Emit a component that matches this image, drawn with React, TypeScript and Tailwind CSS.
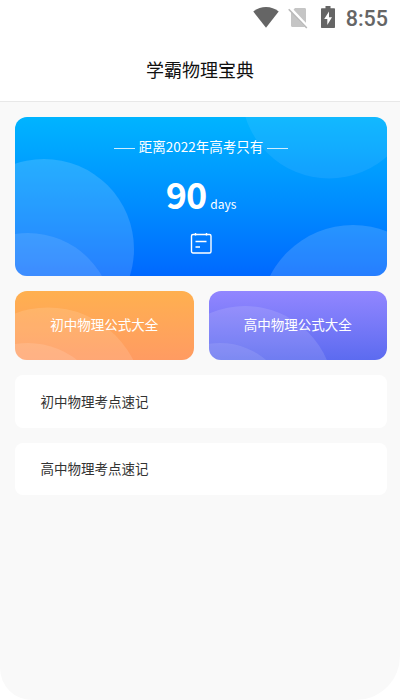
interface Circle {
  cx: number
  cy: number
  r: number
  opacity: number
}

const bannerCircles: Circle[] = [
  { cx: 29, cy: 132, r: 90, opacity: 0.15 },
  { cx: 13, cy: 201, r: 85, opacity: 0.11 },
  { cx: 314, cy: -26, r: 87.5, opacity: 0.07 },
  { cx: 338, cy: 201, r: 93, opacity: 0.15 },
]

const formulaCards = [
  {
    title: "初中物理公式大全",
    background: "from-[#ffb04f] to-[#ff9b62]",
    circles: [
      { cx: 33, cy: 112, r: 95.5, opacity: 0.12 },
      { cx: 13, cy: 131, r: 79, opacity: 0.12 },
    ],
  },
  {
    title: "高中物理公式大全",
    background: "from-[#9286ff] to-[#5c6bf0]",
    circles: [
      { cx: 36, cy: 104, r: 89, opacity: 0.12 },
      { cx: 11, cy: 123, r: 71, opacity: 0.1 },
    ],
  },
]

const notes = ["初中物理考点速记", "高中物理考点速记"]

function Circles({ items }: { items: Circle[] }) {
  return (
    <svg className="absolute inset-0 h-full w-full" aria-hidden="true">
      {items.map((c, i) => (
        <circle key={i} cx={c.cx} cy={c.cy} r={c.r} fill="#fff" fillOpacity={c.opacity} />
      ))}
    </svg>
  )
}

function StatusBar() {
  return (
    <div className="flex h-9 items-start justify-end pr-3 text-[#656565]">
      <svg className="mt-[7px] h-[21px] w-[26px]" viewBox="0 0 26 21" fill="currentColor">
        <path d="M.3 4.500C4 1.700 8.200 0 13 0s9 1.700 12.700 4.500L13 20.700z" />
      </svg>
      <svg className="mt-[7px] ml-[9px] h-[22px] w-5" viewBox="0 0 20 22">
        <path d="M7 1h9.500c1 0 1.500.6 1.500 1.500v16c0 1-.6 1.500-1.500 1.500h-12c-1 0-1.500-.6-1.500-1.500V5.500z" fill="#c5c5c5" />
        <path d="M2 1.500L19.500 20" stroke="#fff" strokeWidth="3.500" />
        <path d="M.7 2.200L18.800 21" stroke="#b9b9b9" strokeWidth="1.600" />
      </svg>
      <svg className="mt-1.5 ml-[13px] h-[22px] w-[14px]" viewBox="0 0 14 22" fill="currentColor">
        <path d="M4.500 0h5v2.300H13c.6 0 1 .4 1 1V21c0 .6-.4 1-1 1H1c-.6 0-1-.4-1-1V3.300c0-.6.4-1 1-1h3.500z" />
        <path d="M8 5.500L3.200 13h3.100v6L11 11.200H8z" fill="#fff" />
      </svg>
      <span className="mt-[7px] ml-[11px] font-[Roboto] text-[21.5px] leading-6 font-medium">8:55</span>
    </div>
  )
}

function CalendarIcon() {
  return (
    <svg className="h-[22px] w-[22px]" viewBox="0 0 22 22" fill="none" stroke="#fff" strokeWidth="1.400">
      <rect x="1.500" y="2.500" width="19.500" height="18.500" rx="1.500" />
      <path d="M5.500 1v2.500M16.500 1v2.500M5.500 9.500h11M5.500 15h4.500" />
    </svg>
  )
}

function CountdownBanner() {
  return (
    <section className="relative h-[159px] overflow-hidden rounded-xl bg-linear-to-b from-[#00b4ff] to-[#0068ff] text-white">
      <Circles items={bannerCircles} />
      <div className="relative flex flex-col items-center">
        <div className="mt-[19px] flex h-5 items-center gap-1 text-[13.5px] leading-5 whitespace-nowrap">
          <span className="mt-[5px] h-px w-[21px] bg-white/80" />
          <span>距离2022年高考只有</span>
          <span className="mt-[5px] h-px w-[21px] bg-white/80" />
        </div>
        <div className="mt-[13px] flex items-baseline gap-1">
          <strong className="text-[36px] leading-12 font-bold tracking-[-1px]">90</strong>
          <span className="text-[12px]">days</span>
        </div>
        <div className="mt-[15px]">
          <CalendarIcon />
        </div>
      </div>
    </section>
  )
}

export default function App() {
  return (
    <div className="bg-white font-['Noto_Sans_CJK_SC',sans-serif]">
      <div className="flex h-[700px] w-[400px] flex-col overflow-hidden rounded-br-[44px] rounded-bl-[32px] bg-[#f9f9f9]">
        <header className="h-[102px] shrink-0 border-b border-[#e8e8e8] bg-white">
          <StatusBar />
          <h1 className="mt-[19px] text-center text-[18px] leading-7 text-[#111]">学霸物理宝典</h1>
        </header>

        <main className="flex flex-col gap-[15px] pt-[15px] pr-[13px] pl-[15px]">
          <CountdownBanner />

          <div className="grid grid-cols-2 gap-[15px]">
            {formulaCards.map((card) => (
              <div
                key={card.title}
                className={`relative flex h-[69px] items-center justify-center overflow-hidden rounded-xl bg-linear-to-b pb-[3px] ${card.background}`}
              >
                <Circles items={card.circles} />
                <span className="relative text-[13.5px] leading-5 text-white">{card.title}</span>
              </div>
            ))}
          </div>

          {notes.map((note) => (
            <div key={note} className="flex h-[52.5px] items-center rounded-lg bg-white px-[25.5px] pb-px">
              <span className="text-[13.5px] leading-5 text-[#333]">{note}</span>
            </div>
          ))}
        </main>
      </div>
    </div>
  )
}
